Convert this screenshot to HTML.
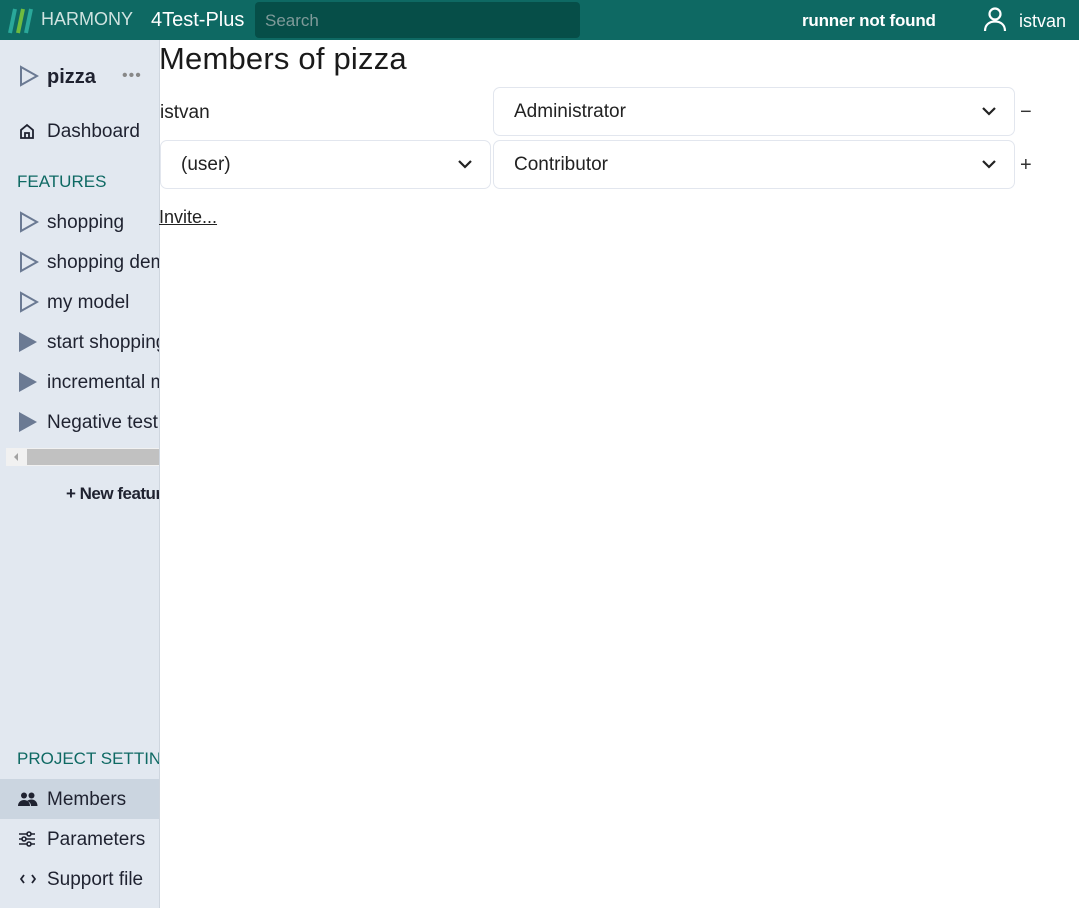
<!DOCTYPE html>
<html><head><style>
*{box-sizing:border-box;margin:0;padding:0}
body{width:1079px;height:908px;overflow:hidden;font-family:"Liberation Sans",sans-serif;background:#fff;color:#1a1a1a;position:relative}
.hdr{position:absolute;left:0;top:0;width:1079px;height:40px;background:#0e6963;color:#fff}
.side{position:absolute;left:0;top:40px;width:160px;height:868px;background:#e2e8f0;border-right:1px solid #cfd6df;overflow:hidden}
.t{position:absolute;white-space:nowrap}
.nav{position:absolute;left:47px;font-size:19px;color:#1f2230;white-space:nowrap}
.tri{position:absolute;left:19px;width:0;height:0;border-top:10px solid transparent;border-bottom:10px solid transparent;border-left:18px solid #6b7a93}
.sel{position:absolute;height:49px;border:1px solid #e2e6ee;border-radius:7px;background:#fff;font-size:19px;color:#222}
.sel span{position:absolute;left:20px;top:13px}
.sel svg{position:absolute;right:18px;top:19px}
.sec{position:absolute;left:17px;font-size:17px;color:#0e6963;white-space:nowrap}
</style></head><body>
<div class="hdr">
<svg class="t" style="left:6px;top:6px" width="30" height="28"><g stroke-width="4"><line x1="4" y1="27" x2="9" y2="3" stroke="#2aa89a"/><line x1="12" y1="27" x2="17" y2="3" stroke="#6fbb3f"/><line x1="20" y1="27" x2="25" y2="3" stroke="#2aa89a"/></g></svg>
<div class="t" style="left:41px;top:9px;font-size:18px;color:#cfe3e0">HARMONY</div>
<div class="t" style="left:151px;top:9px;font-size:20px;color:#fff">4Test-Plus</div>
<div class="t" style="left:255px;top:2px;width:325px;height:36px;background:#064e48;border-radius:4px"><span style="position:absolute;left:10px;top:9px;font-size:17px;color:#7f9a99">Search</span></div>
<div class="t" style="left:802px;top:11px;font-size:17px;font-weight:bold;color:#fff;letter-spacing:-0.2px">runner not found</div>
<svg class="t" style="left:982px;top:6px" width="26" height="26" fill="none" stroke="#fff" stroke-width="2.2"><circle cx="13" cy="8" r="5.5"/><path d="M3 25c0-6 4-9.5 10-9.5s10 3.5 10 9.5"/></svg>
<div class="t" style="left:1019px;top:11px;font-size:18px;color:#fff">istvan</div>
</div>
<div class="side">
<svg class="t" style="left:19px;top:25px" width="20" height="22" fill="none" stroke="#6b7a93" stroke-width="2"><path d="M2 2L18 11L2 20Z"/></svg>
<div class="nav" style="top:26px;font-weight:bold;font-size:20px">pizza</div>
<div class="t" style="left:122px;top:27px;font-size:16px;color:#888;letter-spacing:1px">•••</div>
<svg class="t" style="left:19px;top:83px" width="16" height="16" fill="none" stroke="#1f2230" stroke-width="1.8"><path d="M2 7L8 2L14 7V15H2Z"/><path d="M6 15V10H10V15"/></svg>
<div class="nav" style="top:81px">Dashboard</div>
<div class="sec" style="top:132px">FEATURES</div>
<svg class="t" style="left:19px;top:171px" width="20" height="22" fill="none" stroke="#6b7a93" stroke-width="2"><path d="M2 2L18 11L2 20Z"/></svg>
<div class="nav" style="top:172px">shopping</div>
<svg class="t" style="left:19px;top:211px" width="20" height="22" fill="none" stroke="#6b7a93" stroke-width="2"><path d="M2 2L18 11L2 20Z"/></svg>
<div class="nav" style="top:212px">shopping demo</div>
<svg class="t" style="left:19px;top:251px" width="20" height="22" fill="none" stroke="#6b7a93" stroke-width="2"><path d="M2 2L18 11L2 20Z"/></svg>
<div class="nav" style="top:252px">my model</div>
<div class="tri" style="top:292px"></div><div class="nav" style="top:292px">start shopping</div>
<div class="tri" style="top:332px"></div><div class="nav" style="top:332px">incremental model</div>
<div class="tri" style="top:372px"></div><div class="nav" style="top:372px">Negative test</div>
<div class="t" style="left:6px;top:408px;width:154px;height:18px;background:#f1f1f1"><div style="position:absolute;left:21px;top:1px;width:133px;height:16px;background:#c1c1c1"></div><div style="position:absolute;left:8px;top:5px;border-top:4px solid transparent;border-bottom:4px solid transparent;border-right:4px solid #a3a3a3"></div></div>
<div class="t" style="left:66px;top:444px;font-size:17px;font-weight:bold;color:#1f2230;letter-spacing:-0.5px">+ New feature</div>
<div class="sec" style="top:709px">PROJECT SETTINGS</div>
<div class="t" style="left:0;top:739px;width:160px;height:40px;background:#cbd5e0"></div>
<svg class="t" style="left:18px;top:752px" width="20" height="14" fill="#1f2230"><circle cx="6" cy="3.5" r="3"/><circle cx="13.5" cy="3.5" r="3"/><path d="M0 14c0-4 3-6 6-6s6 2 6 6z"/><path d="M9 9c1-1 3-1.5 4.5-1.5 3 0 6 2 6 6.5H13c0-2-1-4-4-5z"/></svg>
<div class="nav" style="top:749px">Members</div>
<svg class="t" style="left:18px;top:790px" width="18" height="18" fill="none" stroke="#1f2230" stroke-width="1.6"><path d="M1 4H17M1 9H17M1 14H17"/><circle cx="11" cy="4" r="2" fill="#e2e8f0"/><circle cx="6" cy="9" r="2" fill="#e2e8f0"/><circle cx="11" cy="14" r="2" fill="#e2e8f0"/></svg>
<div class="nav" style="top:789px">Parameters</div>
<svg class="t" style="left:20px;top:834px" width="16" height="10" fill="none" stroke="#1f2230" stroke-width="1.8"><path d="M4 1L1 5L4 9M12 1L15 5L12 9"/></svg>
<div class="nav" style="top:829px">Support file</div>
</div>
<div class="t" style="left:159px;top:41px;font-size:31px;color:#1a1a1a;letter-spacing:0.2px">Members of pizza</div>
<div class="t" style="left:160px;top:102px;font-size:19px;color:#222">istvan</div>
<div class="sel" style="left:493px;top:87px;width:522px"><span>Administrator</span><svg width="14" height="9" fill="none" stroke="#222" stroke-width="2.2"><path d="M1 1L7 7L13 1"/></svg></div>
<div class="t" style="left:1020px;top:101px;font-size:20px;color:#333">−</div>
<div class="sel" style="left:160px;top:140px;width:331px"><span>(user)</span><svg width="14" height="9" fill="none" stroke="#222" stroke-width="2.2"><path d="M1 1L7 7L13 1"/></svg></div>
<div class="sel" style="left:493px;top:140px;width:522px"><span>Contributor</span><svg width="14" height="9" fill="none" stroke="#222" stroke-width="2.2"><path d="M1 1L7 7L13 1"/></svg></div>
<div class="t" style="left:1020px;top:154px;font-size:20px;color:#333">+</div>
<div class="t" style="left:159px;top:207px;font-size:18px;color:#222;text-decoration:underline">Invite...</div>
</body></html>
